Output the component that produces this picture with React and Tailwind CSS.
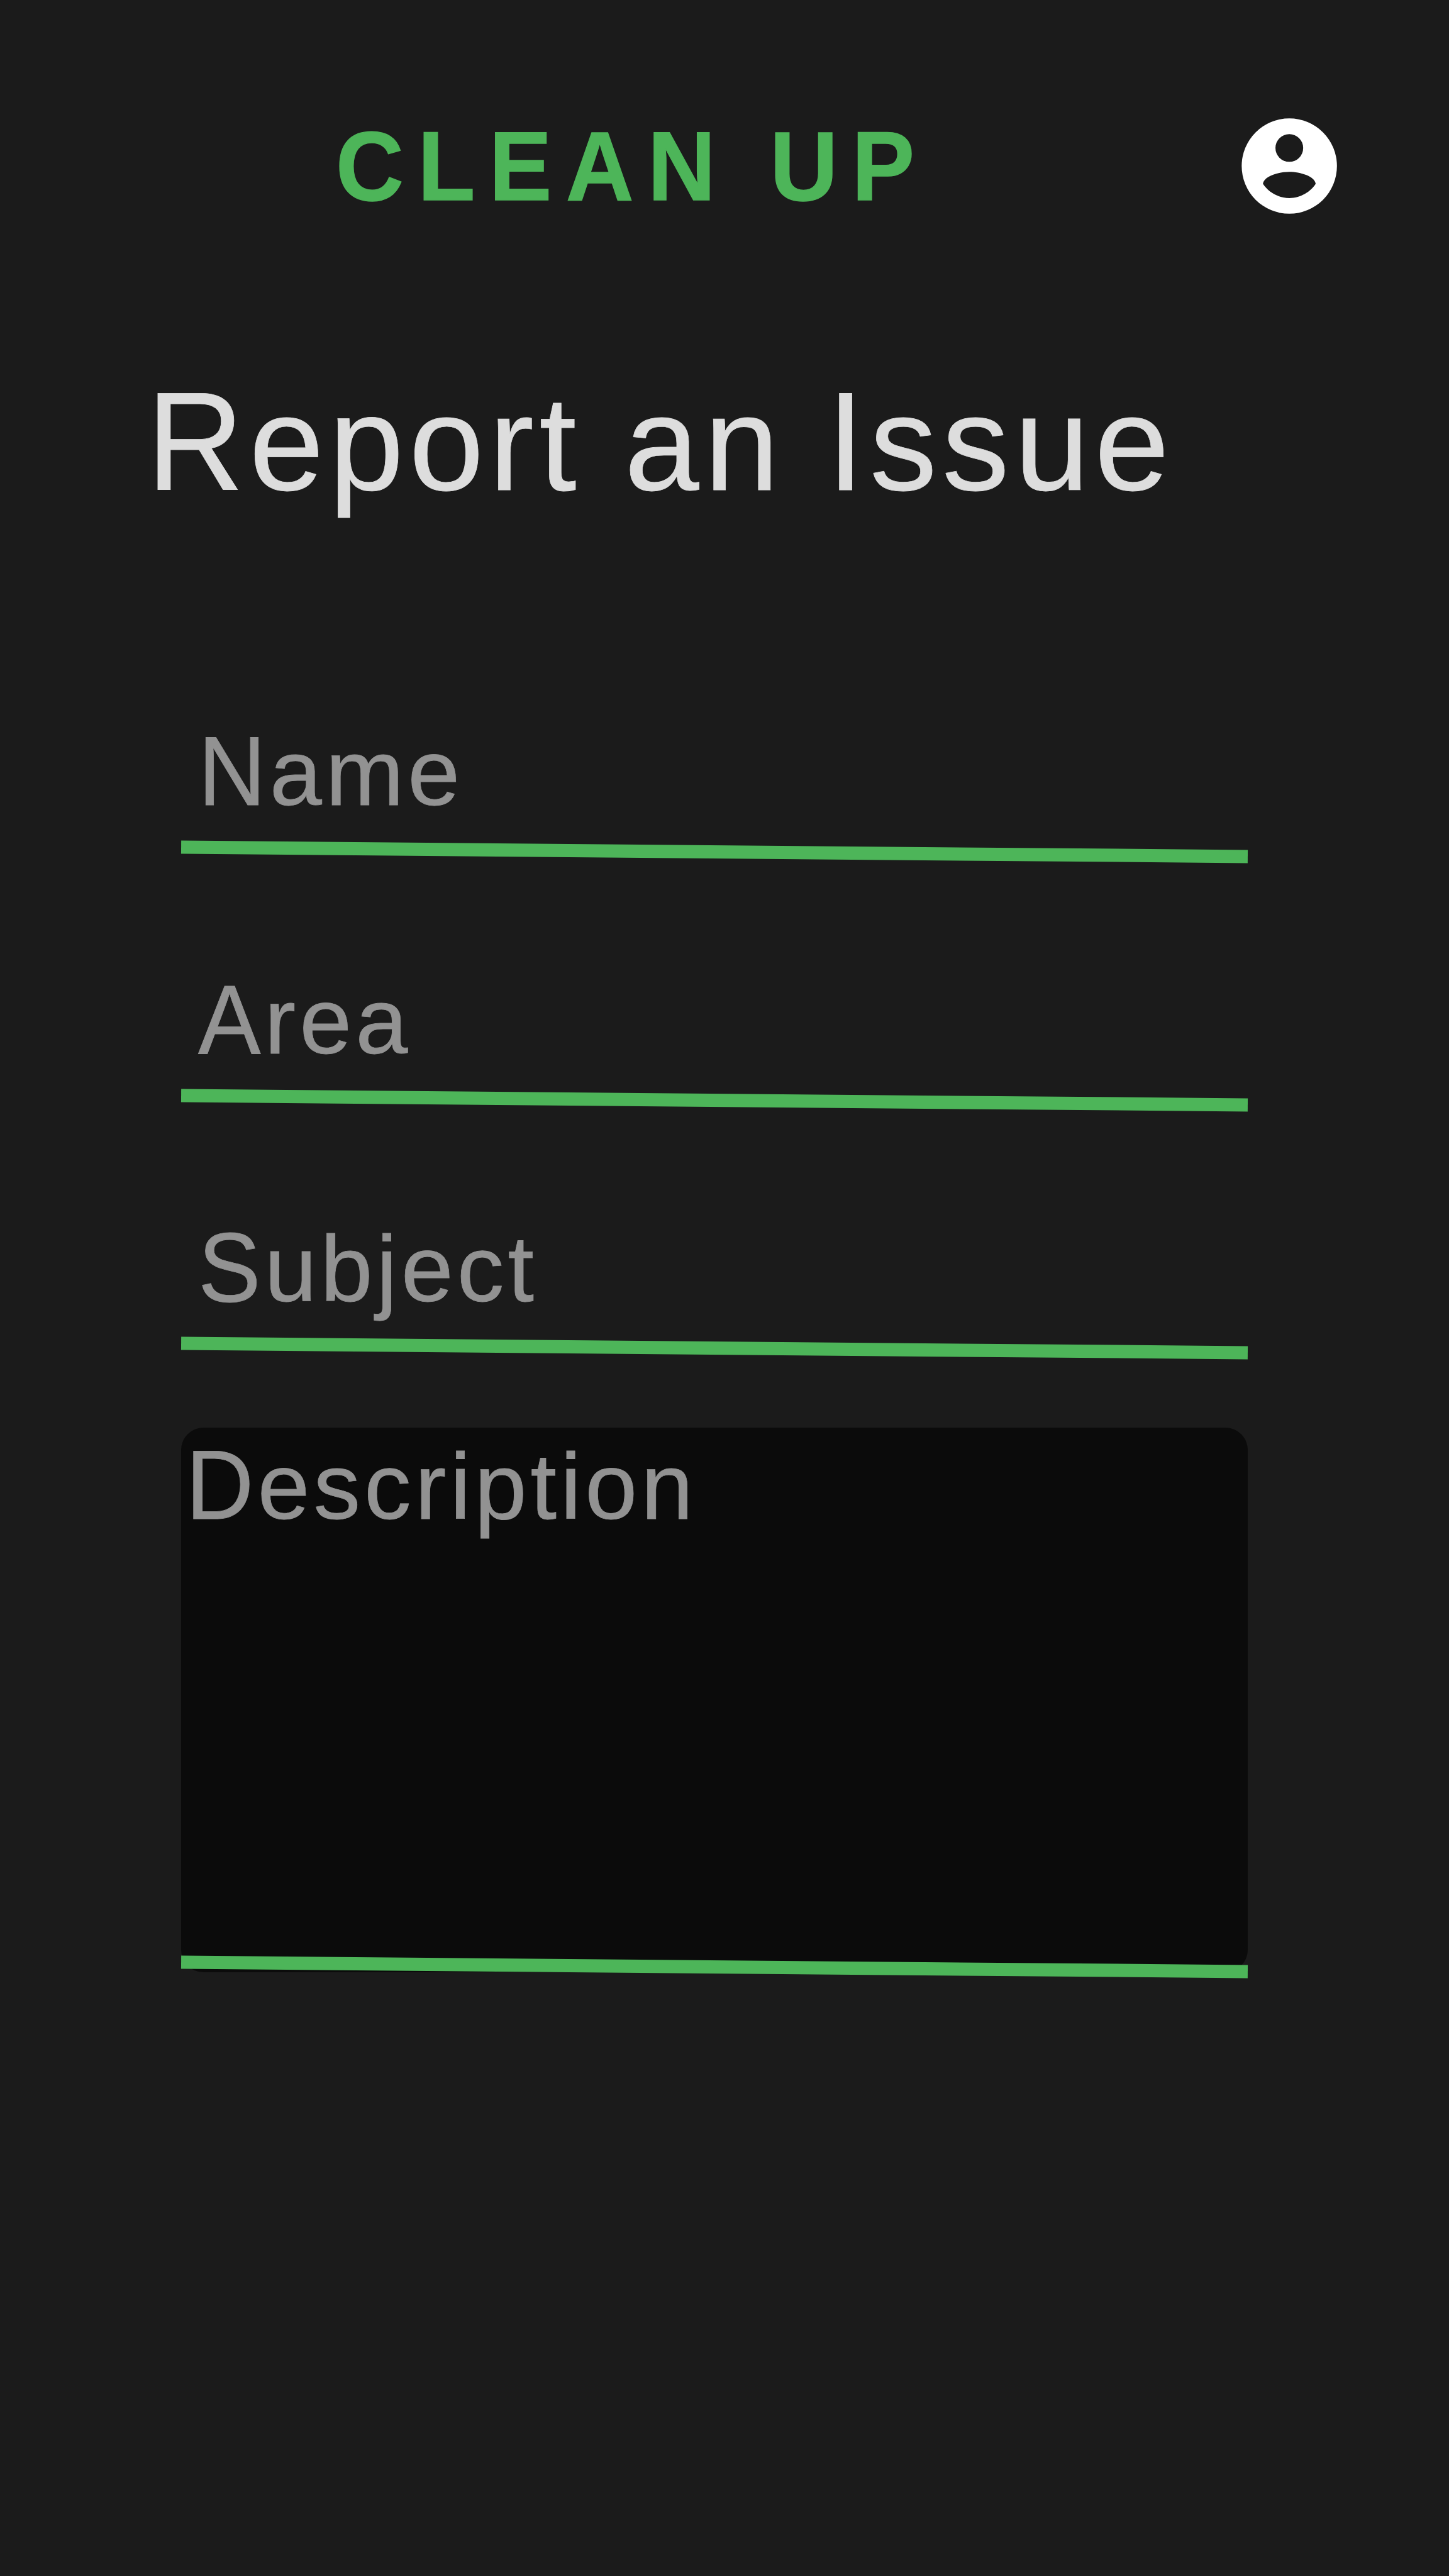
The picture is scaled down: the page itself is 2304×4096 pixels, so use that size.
const FIELDS = ["Name", "Area", "Subject"];

// Draws a label whose capital letter is slightly taller than the font's own.
function CapText({ children, className }) {
  return (
    <span className={className}>
      <span className="inline-block origin-[50%_81%] scale-y-[1.047]">{children[0]}</span>
      {children.slice(1)}
    </span>
  );
}

function Underline() {
  return <div className="h-[21.33px] w-[1696px] rotate-[0.5deg] bg-[#4db559]" />;
}

function AccountIcon() {
  return (
    <svg viewBox="0 0 214 214" className="mt-[5.7px] size-[152.2px]" aria-label="Account">
      <path
        fill="#fff"
        fillRule="evenodd"
        d="M107 .5a106.5 106.5 0 1 1 0 213a106.5 106.5 0 1 1 0-213Z
           M107 35.5a31 31 0 1 0 0 62a31 31 0 1 0 0-62Z
           M48 146.7C60 165 82 178.5 107 178.5S154 165 166 146.7C164 130 132 120 107 120S50 130 48 146.7Z"
      />
    </svg>
  );
}

export default function App() {
  return (
    <main className="flex h-[4096px] w-[2304px] flex-col overflow-hidden bg-[#1b1b1b] font-['Liberation_Sans',Arial,sans-serif] [font-kerning:none] [-webkit-text-stroke-width:0.8px]">
      <header className="flex h-[585.7px] items-start justify-between pt-[182.7px] pr-[177.8px] pl-[534px]">
        <div className="origin-[50%_135px] scale-y-[1.047] text-[149.33px] leading-[167px] font-bold tracking-[0.15em] whitespace-nowrap text-[#4db559] [-webkit-text-stroke-width:1.4px]">
          CLEAN UP
        </div>
        <AccountIcon />
      </header>

      <h1 className="pl-[233.6px] text-[213.33px] leading-[238px] font-normal tracking-[0.04em] whitespace-nowrap text-[#dddddd]">
        <CapText>Report an </CapText>
        <CapText>Issue</CapText>
      </h1>

      <form className="mt-[321.3px] ml-[288px] w-[1696px] text-[149.33px] leading-[167px] tracking-[0.04em] text-[#929292]">
        {FIELDS.map((name) => (
          <div key={name} className="flex h-[394.67px] flex-col gap-[32px]">
            <CapText className="h-[167px] pl-[27px]">{name}</CapText>
            <Underline />
          </div>
        ))}
        <div className="-mt-[59.1px] flex h-[866.1px] flex-col justify-between rounded-[35.5px] bg-[#0b0b0b] pt-[10px]">
          <CapText className="h-[167px] pl-[7.6px]">Description</CapText>
          <div className="mb-[-2.1px] -translate-y-[0px]">
            <Underline />
          </div>
        </div>
      </form>
    </main>
  );
}
